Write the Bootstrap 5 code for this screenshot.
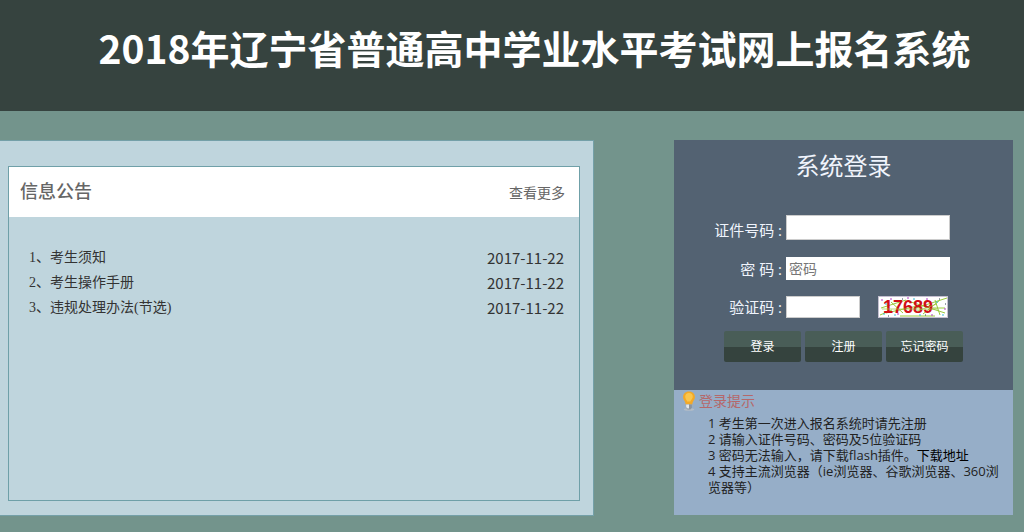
<!DOCTYPE html>
<html lang="zh-CN">
<head>
<meta charset="utf-8">
<meta name="viewport" content="width=device-width, initial-scale=1">
<title>2018年辽宁省普通高中学业水平考试网上报名系统</title>
<link rel="stylesheet" href="https://cdn.jsdelivr.net/npm/bootstrap@5.3.0/dist/css/bootstrap.min.css">
<style>
  body { background: #73948c; color: #333; font: 14px/20px "Open Sans", "Noto Sans CJK SC", sans-serif; }
  a { color: inherit; text-decoration: none; }
  a:hover { text-decoration: underline; }
  .site-head { background: #36433f; padding: 17px 0 34px 45px; }
  .site-head h1 { font-family: "Noto Sans CJK SC", sans-serif; font-size: 39px; line-height: 60px; font-weight: 700; color: #fff; }
  .page-grid { display: grid; grid-template-columns: 594fr 339fr; column-gap: 80px; padding: 29px 11px 16px 0; }
  .notice-panel { background: #bfd5dd; border: 1px solid #74a0a8; border-left: 0; padding: 25px 13px 14px 8px; }
  .notice-box { border: 1px solid #6fa0a8; min-height: 335px; }
  .notice-head { background: #fff; color: #666; height: 50px; padding: 0 14px 2px 11px; }
  .notice-head h2 { font-size: 18px; line-height: 24px; font-weight: 500; }
  .notice-head a { padding-top: 4px; }
  .notice-list { padding: 28px 15px 0 20px; }
  .notice-list li { line-height: 25px; }
  .notice-list a { font-family: "Liberation Serif", "Noto Sans CJK SC", serif; }
  .notice-list span { font-family: "Noto Sans CJK SC", sans-serif; font-size: 15px; }
  .login-box { background: #536272; color: #f0f4fc; height: 250px; padding-top: 8px; }
  .login-box h2 { font-size: 24px; line-height: 36px; font-weight: 400; margin-bottom: 31px; }
  .login-box label { width: 112px; padding-right: 4px; font-size: 15px; line-height: 20px; text-align: right; white-space: pre; }
  .first-row { margin-bottom: 17px; }
  .field { background: #fff; border: 1px solid #ccc; border-radius: 0; padding: 0 2px; width: 164px; height: 25px; font-size: 14px; line-height: 20px; }
  .field::placeholder { color: #777; }
  .field-pass { border-color: #fff; height: 23px; }
  .field-code { width: 74px; height: 22px; margin-right: 18px; }
  .btn-dark-split { background: linear-gradient(#495d57 50%, #35433e 50%); border: 0; border-radius: 2px; color: #fff; width: 77px; height: 31px; padding: 1px 0 0; font-size: 12px; line-height: 30px; }
  .btn-dark-split:hover { color: #fff; background: linear-gradient(#546a63 50%, #3c4c46 50%); }
  .login-actions { gap: 4px; margin: 13px 0 0 50px; }
  .tips-box { background: #96aec8; color: #222; min-height: 125px; padding: 1px 10px 19px 8px; }
  .tips-box h3 { font-size: 14px; line-height: 20px; font-weight: 400; color: #b5686a; gap: 3px; }
  .tips-box h3 svg { flex: none; }
  .tips-box ol { padding-left: 26px; font-size: 13px; line-height: 16px; margin-top: 4px; }
  .tips-box ol a { color: #000; }
</style>
</head>
<body>
<header class="site-head text-center"><h1 class="m-0">2018年辽宁省普通高中学业水平考试网上报名系统</h1></header>
<main class="page-grid">
  <section class="notice-panel">
    <div class="notice-box">
      <div class="notice-head d-flex justify-content-between align-items-center">
        <h2 class="m-0">信息公告</h2><a href="#">查看更多</a>
      </div>
      <ul class="notice-list list-unstyled m-0">
        <li class="d-flex justify-content-between"><a href="#">1、考生须知</a><span>2017-11-22</span></li>
        <li class="d-flex justify-content-between"><a href="#">2、考生操作手册</a><span>2017-11-22</span></li>
        <li class="d-flex justify-content-between"><a href="#">3、违规处理办法(节选)</a><span>2017-11-22</span></li>
      </ul>
    </div>
  </section>
  <aside>
    <form class="login-box" onsubmit="return false">
      <h2 class="text-center mt-0">系统登录</h2>
      <div class="first-row d-flex align-items-end"><label for="idno">证件号码 :</label><input class="field" id="idno" type="text"></div>
      <div class="d-flex align-items-center mb-3"><label for="pwd">密 码 :</label><input class="field field-pass" id="pwd" type="password" placeholder="密码"></div>
      <div class="d-flex align-items-center"><label for="code">验证码 :</label><input class="field field-code" id="code" type="text">
        <svg width="70" height="22" viewBox="0 0 70 22" role="img" aria-label="17689">
          <rect x=".5" y=".5" width="69" height="21" fill="#fff" stroke="#c4bfd0"/>
          <g fill="none" stroke="#9aca3c"><path d="M3 12L28 4M8 17L44 9M22 20H57M30 5L67 17M38 12L69 2M45 18L62 4M57 4L62 19M52 12H67M13 6L25 17M2 19L14 14"/></g>
          <text x="5" y="17" font-family="Liberation Sans, sans-serif" font-size="18" font-weight="700" fill="#d00f16">17689</text>
          <path d="M4 13H60M39 15L59 8" stroke="#9aca3c" stroke-opacity=".7" fill="none"/>
          <path d="M3 4h2M12 3h2M19 18h2M29 2h2M48 3h2M66 13h2M53 19h2" stroke="#b33cc4" stroke-width="1"/>
          <path d="M7 8h2M16 19h2M35 3h2M58 6h2M64 19h2M41 19h2M5 18h2" stroke="#35b8d8" stroke-width="1"/>
          <path d="M24 3h1M10 20h1M61 3h1M47 19h1M67 8h1" stroke="#345" stroke-width="1"/>
        </svg>
      </div>
      <div class="login-actions d-flex">
        <button class="btn btn-dark-split" type="submit">登录</button>
        <button class="btn btn-dark-split" type="button">注册</button>
        <button class="btn btn-dark-split" type="button">忘记密码</button>
      </div>
    </form>
    <section class="tips-box">
      <h3 class="d-flex align-items-center m-0">
        <svg width="14" height="20" viewBox="0 0 14 21" aria-hidden="true">
          <ellipse cx="7" cy="19.5" rx="5.5" ry="1.3" fill="#b3bcc6"/>
          <path d="M7 .5C3.200.5.8 3 .8 6.300c0 3 2.500 4.200 2.700 7.900h7c.2-3.700 2.700-4.900 2.700-7.900C13.200 3 10.800.5 7 .5z" fill="#f3a928"/>
          <path d="M7 2C4.500 2 3 3.800 3 6c0 2 1.500 3 2 5h3.500C9 9 11 8 11 6c0-2.200-1.500-4-4-4z" fill="#fac64e"/>
          <path d="M4 14.200h6v3.500L8.500 19.500h-3L4 17.700z" fill="#8d959d"/><path d="M4 14.200h3v4.300H5.500L4 17z" fill="#e3e7ea"/>
        </svg>登录提示</h3>
      <ol class="list-unstyled mb-0">
        <li>1 考生第一次进入报名系统时请先注册</li>
        <li>2 请输入证件号码、密码及5位验证码</li>
        <li>3 密码无法输入，请下载flash插件。<a href="#">下载地址</a></li>
        <li>4 支持主流浏览器（ie浏览器、谷歌浏览器、360浏览器等）</li>
      </ol>
    </section>
  </aside>
</main>
<script src="https://cdn.jsdelivr.net/npm/bootstrap@5.3.0/dist/js/bootstrap.bundle.min.js"></script>
</body>
</html>
